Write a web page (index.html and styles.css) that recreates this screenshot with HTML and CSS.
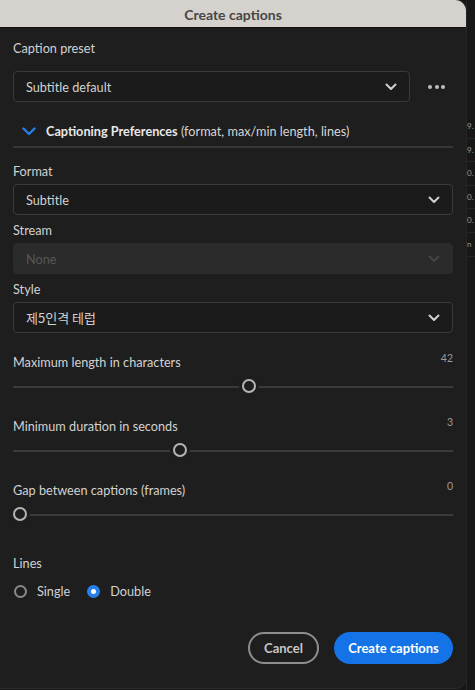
FILE: index.html
```html
<!DOCTYPE html>
<html>
<head>
<meta charset="utf-8">
<link rel="stylesheet" href="styles.css">
</head>
<body>
<div class="dialog">
  <div class="titlebar">Create captions</div>
  <div class="content">
    <div class="label first">Caption preset</div>
    <div class="preset-row">
      <div class="select preset">
        <span>Subtitle default</span>
        <svg class="chev" width="12" height="8" viewBox="0 0 12 8"><path d="M1.5 1.5 L6 6 L10.5 1.5" fill="none" stroke="#cfcfcf" stroke-width="2" stroke-linecap="round" stroke-linejoin="round"/></svg>
      </div>
      <div class="more"><i></i><i></i><i></i></div>
    </div>
    <div class="prefs">
      <svg class="bluechev" width="14" height="9" viewBox="0 0 14 9"><path d="M1.5 1.5 L7 7 L12.5 1.5" fill="none" stroke="#2680eb" stroke-width="2.4" stroke-linecap="round" stroke-linejoin="round"/></svg>
      <span class="bold">Captioning Preferences</span>&nbsp;<span>(format, max/min length, lines)</span>
    </div>
    <div class="divider"></div>

    <div class="label after-divider">Format</div>
    <div class="select">
      <span>Subtitle</span>
      <svg class="chev" width="12" height="8" viewBox="0 0 12 8"><path d="M1.5 1.5 L6 6 L10.5 1.5" fill="none" stroke="#cfcfcf" stroke-width="2" stroke-linecap="round" stroke-linejoin="round"/></svg>
    </div>
    <div class="label">Stream</div>
    <div class="select disabled">
      <span>None</span>
      <svg class="chev" width="12" height="8" viewBox="0 0 12 8"><path d="M1.5 1.5 L6 6 L10.5 1.5" fill="none" stroke="#444" stroke-width="2" stroke-linecap="round" stroke-linejoin="round"/></svg>
    </div>
    <div class="label">Style</div>
    <div class="select">
      <span class="kr">제5인격 테럽</span>
      <svg class="chev" width="12" height="8" viewBox="0 0 12 8"><path d="M1.5 1.5 L6 6 L10.5 1.5" fill="none" stroke="#cfcfcf" stroke-width="2" stroke-linecap="round" stroke-linejoin="round"/></svg>
    </div>

    <div class="slider-block first-slider">
      <div class="slider-head"><span>Maximum length in characters</span><span class="val">42</span></div>
      <div class="track"><div class="thumb" style="left: 53.8%"></div></div>
    </div>
    <div class="slider-block">
      <div class="slider-head"><span>Minimum duration in seconds</span><span class="val">3</span></div>
      <div class="track"><div class="thumb" style="left: 37.6%"></div></div>
    </div>
    <div class="slider-block">
      <div class="slider-head"><span>Gap between captions (frames)</span><span class="val">0</span></div>
      <div class="track"><div class="thumb" style="left: 0%"></div></div>
    </div>

    <div class="label lines">Lines</div>
    <div class="radios">
      <div class="radio"><span class="circle"></span><span>Single</span></div>
      <div class="radio"><span class="circle on"></span><span>Double</span></div>
    </div>

    <div class="buttons">
      <div class="btn cancel">Cancel</div>
      <div class="btn primary">Create captions</div>
    </div>
  </div>
</div>
<div class="backdrop">
  <div class="frag">9.</div>
  <div class="frag">9.</div>
  <div class="frag">0.</div>
  <div class="frag">0.</div>
  <div class="frag">0.</div>
  <div class="frag">n</div>
</div>
</body>
</html>
```

FILE: styles.css
```css
html, body {
  margin: 0;
  padding: 0;
  height: 690px;
  overflow: hidden;
  background: #171717;
  font-family: "Lato", "Noto Sans CJK KR", sans-serif;
  font-size: 12.7px;
  color: #d2d2d2;
}
body {
  display: flex;
}
.dialog {
  width: 466px;
  flex: none;
  height: 688px;
  background: #1e1e1e;
  border-radius: 0 11px 11px 0;
  box-shadow: 1px 0 0 #2c2c2c, 0 1px 0 #2c2c2c;
  overflow: hidden;
}
.titlebar {
  height: 28px;
  box-sizing: border-box;
  background: #d5d1cd;
  color: #474545;
  font-weight: 700;
  font-size: 14px;
  display: flex;
  align-items: center;
  justify-content: center;
  border-bottom: 1px solid #101010;
  padding-top: 1px;
}
.content {
  padding: 0 13px;
}
.label {
  line-height: 16px;
  height: 16px;
  margin-top: 7px;
  margin-bottom: 5px;
}
.label.first {
  margin-top: 12px;
  margin-bottom: 15px;
}
.label.after-divider {
  margin-top: 15px;
}
.preset-row {
  display: flex;
  align-items: center;
}
.select {
  height: 31px;
  box-sizing: border-box;
  border: 1px solid #3a3a3a;
  border-radius: 4px;
  background: #1b1b1b;
  display: flex;
  align-items: center;
  justify-content: space-between;
  padding: 0 12px 0 12px;
}
.select.preset {
  width: 397px;
  flex: none;
}
.select.disabled {
  background: #2b2b2b;
  border-color: #2b2b2b;
  color: #575757;
}
.kr {
  font-family: "Noto Sans CJK KR", sans-serif;
  font-size: 13px;
}
.chev {
  display: block;
}
.more {
  flex: 1;
  display: flex;
  justify-content: flex-end;
  gap: 2.5px;
  padding-right: 8px;
}
.more i {
  width: 4px;
  height: 4px;
  border-radius: 50%;
  background: #bdbdbd;
  display: block;
}
.prefs {
  margin-top: 19px;
  height: 20px;
  display: flex;
  align-items: center;
  padding-left: 9px;
  color: #d6d6d6;
}
.bluechev {
  margin-right: 10px;
}
.bold {
  font-weight: 700;
  color: #e8e8e8;
}
.divider {
  margin-top: 5px;
  height: 2px;
  background: #363636;
}
.slider-block.first-slider {
  margin-top: 21px;
}
.slider-head {
  display: flex;
  justify-content: space-between;
  height: 16px;
  line-height: 16px;
}
.val {
  font-size: 10.5px;
  color: #9a9a9a;
  line-height: 12px;
  margin-top: -2px;
}
.track {
  position: relative;
  margin-top: 16px;
  margin-bottom: 30px;
  margin-right: 14px;
  height: 2px;
  background: #3a3a3a;
}
.track::after {
  content: "";
  position: absolute;
  left: 100%;
  top: 0;
  width: 14px;
  height: 2px;
  background: #3a3a3a;
}
.thumb {
  position: absolute;
  top: -7px;
  width: 14px;
  height: 14px;
  box-sizing: border-box;
  border: 2px solid #b5b5b5;
  border-radius: 50%;
  background: #1e1e1e;
  box-shadow: 0 0 0 3px #1e1e1e;
  z-index: 1;
}
.label.lines {
  margin-top: 39px;
  margin-bottom: 0;
}
.radios {
  display: flex;
  gap: 16px;
  margin-top: 10px;
  height: 20px;
  align-items: center;
}
.radio {
  display: flex;
  align-items: center;
  gap: 10px;
}
.circle {
  width: 13px;
  height: 13px;
  box-sizing: border-box;
  border: 2px solid #8a8a8a;
  border-radius: 50%;
  margin-left: 1px;
}
.circle.on {
  border: 4.5px solid #2680eb;
  background: #ffffff;
}
.buttons {
  display: flex;
  justify-content: flex-end;
  gap: 15px;
  margin-top: 31px;
}
.btn {
  height: 32px;
  box-sizing: border-box;
  border-radius: 16px;
  display: flex;
  align-items: center;
  justify-content: center;
  font-weight: 700;
  font-size: 13px;
}
.btn.cancel {
  width: 71px;
  border: 2px solid #8e8e8e;
  color: #c6c6c6;
}
.btn.primary {
  width: 119px;
  background: #1473e6;
  color: #ffffff;
}
.backdrop {
  flex: 1;
  min-width: 0;
  border-left: 1px solid #262626;
  padding-top: 115px;
  overflow: hidden;
  color: #9a9a9a;
  font-size: 8px;
}
.frag {
  height: 22.6px;
  line-height: 22px;
  border-bottom: 1px solid #262626;
  white-space: nowrap;
}
```
